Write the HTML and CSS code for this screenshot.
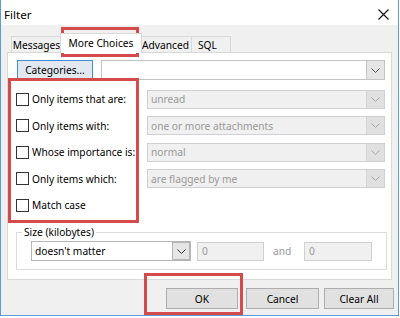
FILE: index.html
```html
<!DOCTYPE html>
<html>
<head>
<meta charset="utf-8">
<link rel="stylesheet" href="styles.css">
</head>
<body>
<div class="window">
  <div class="titlebar">
    <span class="title">Filter</span>
    <svg class="close" width="11" height="11" viewBox="0 0 11 11"><path d="M0.5 0.5 L10.5 10.5 M10.5 0.5 L0.5 10.5" stroke="#111" stroke-width="1.1" fill="none"/></svg>
  </div>
  <div class="body">
    <div class="tabs">
      <div class="tab t-msg">Messages</div>
      <div class="tab active">More Choices</div>
      <div class="tab t-adv">Advanced</div>
      <div class="tab t-sql">SQL</div>
    </div>
    <div class="panel">
      <div class="cat-row">
        <div class="btn cat">Categories...</div>
        <div class="combo wide">
          <span class="val"></span>
          <span class="arrow"><svg width="9" height="5" viewBox="0 0 9 5"><path d="M0.5 0.5 L4.5 4.5 L8.5 0.5" fill="none" stroke="currentColor"/></svg></span>
        </div>
      </div>
      <div class="crit">
        <div class="row">
          <div class="lab"><span class="cb"></span><span>Only items that are:</span></div>
          <div class="combo dis"><span class="val">unread</span><span class="arrow"><svg width="9" height="5" viewBox="0 0 9 5"><path d="M0.5 0.5 L4.5 4.5 L8.5 0.5" fill="none" stroke="currentColor"/></svg></span></div>
        </div>
        <div class="row">
          <div class="lab"><span class="cb"></span><span>Only items with:</span></div>
          <div class="combo dis"><span class="val">one or more attachments</span><span class="arrow"><svg width="9" height="5" viewBox="0 0 9 5"><path d="M0.5 0.5 L4.5 4.5 L8.5 0.5" fill="none" stroke="currentColor"/></svg></span></div>
        </div>
        <div class="row">
          <div class="lab"><span class="cb"></span><span>Whose importance is:</span></div>
          <div class="combo dis"><span class="val">normal</span><span class="arrow"><svg width="9" height="5" viewBox="0 0 9 5"><path d="M0.5 0.5 L4.5 4.5 L8.5 0.5" fill="none" stroke="currentColor"/></svg></span></div>
        </div>
        <div class="row">
          <div class="lab"><span class="cb"></span><span>Only items which:</span></div>
          <div class="combo dis"><span class="val">are flagged by me</span><span class="arrow"><svg width="9" height="5" viewBox="0 0 9 5"><path d="M0.5 0.5 L4.5 4.5 L8.5 0.5" fill="none" stroke="currentColor"/></svg></span></div>
        </div>
        <div class="row">
          <div class="lab"><span class="cb"></span><span>Match case</span></div>
        </div>
      </div>
      <fieldset class="size">
        <legend>Size (kilobytes)</legend>
        <div class="size-row">
          <div class="combo size-combo"><span class="val">doesn't matter</span><span class="arrow"><svg width="9" height="5" viewBox="0 0 9 5"><path d="M0.5 0.5 L4.5 4.5 L8.5 0.5" fill="none" stroke="currentColor"/></svg></span></div>
          <div class="num n1">0</div>
          <span class="and">and</span>
          <div class="num n2">0</div>
        </div>
      </fieldset>
    </div>
    <div class="buttons">
      <div class="btn b-ok">OK</div>
      <div class="btn b-cancel">Cancel</div>
      <div class="btn b-clear">Clear All</div>
    </div>
  </div>
  <div class="mark m-tab"></div>
  <div class="mark m-checks"></div>
  <div class="mark m-ok"></div>
</div>
</body>
</html>
```
FILE: styles.css
```css
* { box-sizing: border-box; }
html, body { margin: 0; padding: 0; background: #ffffff; }
body {
  font-family: "Noto Sans", sans-serif;
  font-size: 10.2px;
  color: #000;
}
.window {
  position: relative;
  width: 399px;
  height: 316px;
  border: 1px solid #5d9ad6;
  border-top: none;
  background: #f0f0f0;
  display: flex;
  flex-direction: column;
}
.titlebar {
  height: 25px;
  flex: none;
  background: #fff;
  display: flex;
  align-items: center;
  justify-content: space-between;
  padding: 3px 9px 0 3px;
}
.title { font-size: 11.6px; }
.close { display: block; }
.body {
  flex: 1;
  display: flex;
  flex-direction: column;
  padding: 0 6px;
}
.tabs {
  height: 27px;
  flex: none;
  display: flex;
  align-items: flex-end;
  padding-left: 4px;
}
.tab {
  height: 16px;
  border: 1px solid #d9d9d9;
  border-bottom: none;
  background: #f0f0f0;
  display: flex;
  align-items: center;
  justify-content: center;
  white-space: nowrap;
}
.t-msg { width: 51px; }
.t-adv { width: 53px; margin-left: -1px; }
.t-sql { width: 40px; margin-left: -1px; justify-content: flex-start; padding-left: 6px; }
.tab.active {
  position: relative;
  z-index: 1;
  width: 82px;
  height: 20px;
  margin: 0 -2px -1px -2px;
  background: #fff;
  padding-bottom: 1px;
}
.panel {
  height: 228px;
  flex: none;
  background: #fff;
  border: 1px solid #d9d9d9;
  padding: 7px 6px 0 9px;
}
.cat-row {
  display: flex;
  gap: 8px;
  height: 20px;
}
.btn {
  display: flex;
  align-items: center;
  justify-content: center;
  background: #e1e1e1;
  border: 1px solid #adadad;
  white-space: nowrap;
}
.cat {
  width: 76px;
  height: 20px;
  background: #e1e8f0;
  border-color: #3f8bd8;
}
.combo {
  display: flex;
  height: 20px;
  background: #fff;
  border: 1px solid #c4c4c4;
}
.combo .val {
  flex: 1;
  display: flex;
  align-items: center;
  padding-left: 3px;
  white-space: nowrap;
  overflow: hidden;
}
.combo .arrow {
  width: 18px;
  display: flex;
  align-items: center;
  justify-content: center;
  background: #e5e5e5;
  border-left: 1px solid #c4c4c4;
  color: #555;
}
.wide { flex: 1; }
.crit {
  margin-top: 5.75px;
  margin-left: -1px;
  display: flex;
  flex-direction: column;
}
.row {
  height: 26.5px;
  display: grid;
  grid-template-columns: 131px 1fr;
  align-items: center;
}
.lab {
  display: flex;
  align-items: center;
  white-space: nowrap;
}
.cb {
  width: 13px;
  height: 13px;
  border: 1px solid #333;
  background: #fff;
  margin-right: 3px;
  flex: none;
}
.combo.dis {
  height: 19px;
  background: #f0f0f0;
  border-color: #cfd0d4;
  color: #999;
}
.combo.dis .arrow {
  background: #e0e0e0;
  border-left-color: #d4d4d4;
  color: #aaa;
}
.size {
  margin: 6.75px -2px 0 -1px;
  padding: 2px 8px 8px 5px;
  border: 1px solid #dcdcdc;
  min-width: 0;
}
.size legend {
  padding: 0 2px;
  line-height: 14px;
}
.size-row {
  display: flex;
  align-items: center;
  margin-left: 9px;
}
.size-combo {
  width: 160px;
  border-color: #b5b5b5;
}
.size-combo .arrow {
  background: #e5e5e5;
  border: 1px solid #b5b5b5;
  margin: 0;
  color: #333;
}
.num {
  height: 19px;
  display: flex;
  align-items: center;
  padding-left: 4px;
  background: #f0f0f0;
  border: 1px solid #cfd0d4;
  color: #999;
}
.n1 { width: 67px; margin-left: 6px; }
.and { color: #999; margin-left: 9px; width: 31px; }
.n2 { width: 68px; }
.buttons {
  display: flex;
  justify-content: flex-end;
  margin: 8px -2px 0 0;
}
.buttons .btn { height: 21px; }
.b-ok { width: 72px; }
.b-cancel { width: 73px; margin-left: 8px; }
.b-clear { width: 70px; margin-left: 5px; }
.mark {
  position: absolute;
  border: 3px solid #d34b4b;
}
.m-tab { left: 60px; top: 27px; width: 78px; height: 30px; }
.m-checks { left: 7px; top: 78px; width: 131px; height: 145px; }
.m-ok { left: 143px; top: 273px; width: 99px; height: 42px; }
```
